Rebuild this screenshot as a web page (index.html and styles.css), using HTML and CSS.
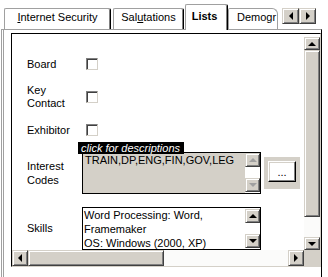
FILE: index.html
```html
<!DOCTYPE html>
<html lang="en">
<head>
    <meta charset="UTF-8">
    <title>Lists</title>
    <link rel="stylesheet" href="styles.css">
</head>
<body>
    <div class="tabs">
        <div class="tab tab-wide"><u>I</u>nternet Security</div>
        <div class="tab tab-mid">Sal<u>u</u>tations</div>
        <div class="tab tab-active">Lists</div>
        <div class="tab tab-cut">Demogr</div>
        <div class="tab-arrows">
            <span class="sb-btn left"></span>
            <span class="sb-btn right"></span>
        </div>
    </div>

    <div class="panel">
        <div class="view">
            <div class="form">
                <div class="row row-board">
                    <div class="label">Board</div>
                    <span class="check"></span>
                </div>
                <div class="row row-key">
                    <div class="label">Key<br>Contact</div>
                    <span class="check"></span>
                </div>
                <div class="row row-exhib">
                    <div class="label">Exhibitor</div>
                    <span class="check"></span>
                </div>
                <div class="row row-codes">
                    <div class="label label-tall">Interest<br>Codes</div>
                    <div class="field field-off">
                        <div class="field-text">TRAIN,DP,ENG,FIN,GOV,LEG</div>
                        <div class="field-scroll">
                            <span class="sb-btn up off"></span>
                            <span class="sb-btn down off"></span>
                        </div>
                    </div>
                    <div class="btn-wrap"><span class="btn">...</span></div>
                </div>
                <div class="row row-skills">
                    <div class="label">Skills</div>
                    <div class="field field-skills">
                        <div class="field-text">Word Processing: Word,<br>Framemaker<br>OS: Windows (2000, XP)</div>
                        <div class="field-scroll">
                            <span class="sb-btn up"></span>
                            <span class="sb-btn down"></span>
                        </div>
                    </div>
                </div>

                <!-- tooltip over the codes box -->
                <div class="tooltip">click for descriptions</div>
            </div>

            <div class="vscroll">
                <span class="sb-btn up"></span>
                <span class="thumb thumb-v"></span>
                <span class="track"></span>
                <span class="sb-btn down"></span>
            </div>

            <div class="hscroll">
                <span class="sb-btn left"></span>
                <span class="thumb thumb-h"></span>
                <span class="track"></span>
                <span class="sb-btn right"></span>
            </div>

            <div class="corner"></div>
        </div>
    </div>
</body>
</html>
```

FILE: styles.css
```css
body {
    margin: 0;
    width: 328px;
    height: 277px;
    overflow: hidden;
    background-color: #fff;
    color: #000;
    font-family: "Liberation Sans", Arial, sans-serif;
    font-size: 11px;
}

/* Tab strip */
.tabs {
    display: flex;
    align-items: flex-end;
    height: 29px;
}

.tab {
    box-sizing: border-box;
    height: 21px;
    margin-right: 2px;
    border: 1px solid #a0a0a0;
    border-bottom: none;
    border-right-color: #000;
    border-radius: 2px 2px 0 0;
    box-shadow: inset -1px 0 #808080;
    background-color: #fff;
    line-height: 16px;
    text-align: center;
    white-space: nowrap;
}

.tab u {
    text-decoration: underline;
}

.tab-wide {
    width: 107px;
    margin-left: 4px;
}

.tab-mid {
    width: 71px;
    margin-right: 0;
}

.tab-active {
    position: relative;
    z-index: 1;
    width: 43px;
    height: 26px;
    margin: 0 0 -1px 1px;
    padding-right: 4px;
    font-weight: bold;
    line-height: 22px;
}

.tab-cut {
    width: 50px;
    margin-right: 0;
    padding-left: 8px;
    overflow: hidden;
    text-align: left;
    border-right-color: #a0a0a0;
    border-radius: 2px 6px 0 0;
    box-shadow: none;
}

.tab-arrows {
    display: flex;
    margin: 0 0 5px 4px;
}

.tab-arrows .sb-btn {
    width: 17px;
    height: 16px;
}

/* Page frame */
.panel {
    height: 244px;
    margin: 0 6px 0 1px;
    padding: 3px 0 0 7px;
    border-left: 3px double #a0a0a0;
    border-top: 1px solid #a0a0a0;
    border-right: 1px solid #000;
}

.view {
    box-sizing: border-box;
    width: 310px;
    display: grid;
    grid-template-columns: 1fr 16px;
    grid-template-rows: 216px 16px;
    border: 1px solid;
    border-color: #000 #d4d0c8 #d4d0c8 #000;
}

.form {
    position: relative;
    overflow: hidden;
    padding: 18px 0 0 15px;
}

.row {
    display: flex;
    align-items: center;
}

.label {
    width: 55px;
    flex-shrink: 0;
    line-height: 13px;
}

.label-tall {
    line-height: 14px;
}

.check {
    box-sizing: border-box;
    width: 12px;
    height: 12px;
    margin-left: 4px;
    border: 1px solid;
    border-color: #808080 #d4d0c8 #d4d0c8 #808080;
    box-shadow: inset 1px 1px #404040;
    background-color: #fff;
}

.row-board {
    height: 24px;
}

.row-key {
    height: 26px;
    margin-top: 8px;
}

.row-exhib {
    height: 14px;
    margin-top: 13px;
}

.row-codes {
    margin-top: 15px;
}

.row-skills {
    margin-top: 13px;
}

/* Text boxes */
.field {
    box-sizing: border-box;
    display: flex;
    width: 179px;
    height: 42px;
    border: 1px solid #000;
    background-color: #fff;
}

.field-text {
    flex: 1;
    padding: 0 2px;
    line-height: 14px;
    white-space: nowrap;
    overflow: hidden;
}

.field-off {
    background-color: #d4d0c8;
}

.field-skills {
    height: 43px;
}

.field-skills .field-text {
    padding: 0 1px;
}

.field-scroll {
    display: flex;
    flex-direction: column;
    justify-content: space-between;
    width: 15px;
    padding: 0 0 1px;
    background-color: #fff;
}

.field-skills .field-scroll {
    padding-top: 1px;
}

.field-scroll .sb-btn {
    width: 15px;
    height: 14px;
}

.btn-wrap {
    margin-left: 3px;
    padding: 4px 4px 7px;
    background-color: #d4d0c8;
}

.btn {
    box-sizing: border-box;
    display: block;
    width: 28px;
    height: 21px;
    border: 1px solid;
    border-color: #fff #000 #000 #fff;
    box-shadow: inset -1px -1px #808080, inset 1px 1px #d4d0c8;
    background-color: #fff;
    line-height: 20px;
    text-align: center;
}

.tooltip {
    position: absolute;
    left: 66px;
    top: 108px;
    height: 12px;
    padding: 0 4px 0 3px;
    background-color: #000;
    color: #fff;
    font-style: italic;
    line-height: 12px;
    white-space: nowrap;
}

/* Scroll bars */
.sb-btn {
    box-sizing: border-box;
    display: flex;
    align-items: center;
    justify-content: center;
    flex-shrink: 0;
    width: 16px;
    height: 16px;
    border: 1px solid;
    border-color: #d4d0c8 #404040 #404040 #d4d0c8;
    box-shadow: inset 1px 1px #fff, inset -1px -1px #808080;
    background-color: #d4d0c8;
}

.sb-btn::before {
    content: "";
    border: 4px solid transparent;
}

.up::before {
    border-top: 0;
    border-bottom-color: #000;
}

.down::before {
    border-bottom: 0;
    border-top-color: #000;
}

.left::before {
    border-left: 0;
    border-right-color: #000;
}

.right::before {
    border-right: 0;
    border-left-color: #000;
}

.off.up::before {
    border-bottom-color: #a0a0a0;
}

.off.down::before {
    border-top-color: #a0a0a0;
}

.thumb {
    box-sizing: border-box;
    border: 1px solid;
    border-color: #d4d0c8 #404040 #404040 #d4d0c8;
    box-shadow: inset 1px 1px #fff, inset -1px -1px #808080;
    background-color: #d4d0c8;
}

.track {
    flex: 1;
    background-color: #fbfbfa;
}

.vscroll {
    display: flex;
    flex-direction: column;
    padding-top: 3px;
}

.vscroll .sb-btn {
    height: 13px;
}

.thumb-v {
    height: 167px;
}

.hscroll {
    display: flex;
}

.thumb-h {
    width: 136px;
}

.corner {
    background-color: #d4d0c8;
}
```
